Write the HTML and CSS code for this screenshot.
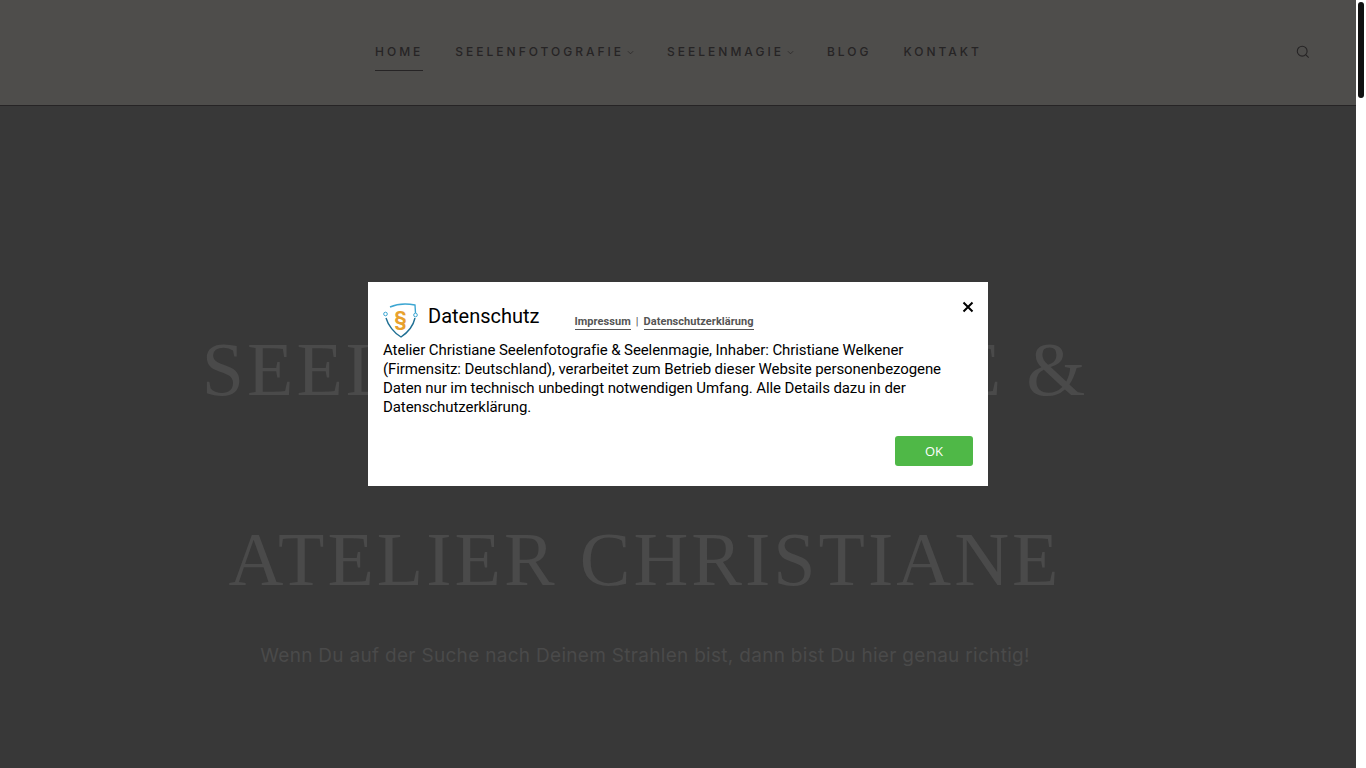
FILE: index.html
```html
<!DOCTYPE html>
<html lang="de">
<head>
    <meta charset="UTF-8">
    <meta name="viewport" content="width=device-width, initial-scale=1.0">
    <title>Atelier Christiane</title>
    <link rel="stylesheet" href="styles.css">
</head>
<body>
    <div class="page">
        <header class="site-header">
            <nav class="main-nav">
                <a class="nav-link active" href="#">HOME</a>
                <a class="nav-link" href="#">SEELENFOTOGRAFIE<svg class="caret" viewBox="0 0 8 5"><path d="M1 1l3 3 3-3"/></svg></a>
                <a class="nav-link" href="#">SEELENMAGIE<svg class="caret" viewBox="0 0 8 5"><path d="M1 1l3 3 3-3"/></svg></a>
                <a class="nav-link" href="#">BLOG</a>
                <a class="nav-link" href="#">KONTAKT</a>
            </nav>
            <svg class="search-icon" viewBox="0 0 14 14"><circle cx="6.2" cy="6.2" r="4.9"/><path d="M9.9 9.9l2.8 2.8"/></svg>
        </header>
        <main class="hero">
            <h1 class="hero-title">SEELENFOTOGRAFIE &amp;<span class="hero-title-mid">SEELENMAGIE</span>ATELIER CHRISTIANE</h1>
            <p class="hero-sub">Wenn Du auf der Suche nach Deinem Strahlen bist, dann bist Du hier genau richtig!</p>
        </main>
    </div>
    <div class="scrollbar"><div class="scroll-thumb"></div></div>

    <div class="modal">
        <div class="modal-head">
            <svg class="modal-logo" viewBox="0 0 36 36">
                <path class="shield-top" d="M7 5C15 1.500 24 1.500 32 3L32.500 11"/>
                <path class="shield-low" d="M3 16C5 23 11 31 18 35C24 31 30 25 32 16"/>
                <circle class="shield-node" cx="2.500" cy="12" r="1.800"/>
                <circle class="shield-node" cx="32.500" cy="13" r="1.800"/>
                <text class="shield-mark" x="17.500" y="24" text-anchor="middle">§</text>
            </svg>
            <span class="modal-title">Datenschutz</span>
            <div class="modal-links">
                <a href="#">Impressum</a>
                <span class="sep">|</span>
                <a href="#">Datenschutzerklärung</a>
            </div>
            <svg class="modal-close" viewBox="0 0 12 12"><path d="M1.500 1.500l9 9M10.500 1.500l-9 9"/></svg>
        </div>
        <p class="modal-text">Atelier Christiane Seelenfotografie &amp; Seelenmagie, Inhaber: Christiane Welkener (Firmensitz: Deutschland), verarbeitet zum Betrieb dieser Website personenbezogene Daten nur im technisch unbedingt notwendigen Umfang. Alle Details dazu in der Datenschutzerklärung.</p>
        <div class="modal-actions">
            <button class="ok-button">OK</button>
        </div>
    </div>
</body>
</html>
```

FILE: styles.css
```css
html, body {
    margin: 0;
    height: 768px;
    overflow: hidden;
}
body {
    display: flex;
    background-color: #fff;
    font-family: "Roboto", sans-serif;
}
.page {
    width: 1356px;
    height: 768px;
    background-color: #383838;
}
.site-header {
    display: flex;
    justify-content: space-between;
    align-items: center;
    box-sizing: border-box;
    height: 106px;
    padding: 0 46px 2px 375px;
    background-color: #4e4d4b;
    border-bottom: 1px solid #262425;
}
.main-nav {
    display: flex;
    gap: 32px;
}
.nav-link {
    display: flex;
    align-items: center;
    height: 38px;
    border-bottom: 1px solid transparent;
    font-family: "Inter", sans-serif;
    font-size: 12px;
    font-weight: 500;
    letter-spacing: 3px;
    color: #262425;
    text-decoration: none;
}
.nav-link.active {
    border-bottom-color: #262425;
}
.caret {
    width: 7px;
    height: 5px;
    margin: 2px 1px 0 3px;
    fill: none;
    stroke: #262425;
    stroke-width: 0.8;
}
.search-icon {
    width: 14px;
    height: 14px;
    fill: none;
    stroke: #262425;
    stroke-width: 1.1;
}
.hero {
    padding: 216px 66px 0 0;
    text-align: center;
}
.hero-title {
    margin: 0;
    font-family: "Liberation Serif", serif;
    font-size: 76px;
    font-weight: 400;
    line-height: 95px;
    letter-spacing: 3px;
    color: #4a4a4a;
}
.hero-title-mid {
    display: block;
    font-size: 52px;
}
.hero-sub {
    margin: 37px 0 0;
    font-family: "Inter", sans-serif;
    font-size: 19px;
    font-weight: 400;
    letter-spacing: 0.3px;
    color: #4a4a4a;
}
.scrollbar {
    width: 10px;
    padding: 2px 2px 0;
    box-sizing: border-box;
}
.scroll-thumb {
    height: 96px;
    background-color: #111;
    border-radius: 3px;
}
.modal {
    position: absolute;
    left: 368px;
    top: 282px;
    width: 620px;
    height: 204px;
    box-sizing: border-box;
    padding: 20px 15px 0;
    background-color: #fff;
    color: #000;
}
.modal-head {
    display: flex;
    align-items: flex-start;
    height: 39px;
}
.modal-logo {
    width: 36px;
    height: 36px;
    flex: none;
}
.shield-top, .shield-low {
    fill: none;
    stroke-width: 1.4;
}
.shield-top {
    stroke: #3ca6d2;
}
.shield-low {
    stroke: #1f6f93;
}
.shield-node {
    fill: #fff;
    stroke: #3ca6d2;
    stroke-width: 1;
}
.shield-mark {
    font-family: "Roboto", sans-serif;
    font-size: 20px;
    font-weight: 700;
    fill: #e8a12d;
}
.modal-title {
    margin: 1px 0 0 9px;
    font-size: 20px;
    line-height: 26px;
}
.modal-links {
    display: flex;
    gap: 5px;
    margin: 13px 0 0 35px;
    font-size: 11px;
    font-weight: 700;
    line-height: 14px;
    letter-spacing: 0.05px;
    color: #555;
}
.modal-links a {
    color: #555;
    text-decoration: none;
    border-bottom: 1px solid #555;
}
.sep {
    font-weight: 400;
}
.modal-close {
    width: 12px;
    height: 12px;
    margin: -1px -1px 0 auto;
    stroke: #000;
    stroke-width: 2;
}
.modal-text {
    margin: 0;
    font-size: 15px;
    line-height: 19px;
    letter-spacing: -0.09px;
}
.modal-actions {
    display: flex;
    justify-content: flex-end;
    margin-top: 19px;
}
.ok-button {
    width: 78px;
    height: 30px;
    padding: 0;
    background-color: #4fb847;
    color: #fff;
    border: none;
    border-radius: 3px;
    font-family: "Open Sans", sans-serif;
    font-size: 13px;
}
```
